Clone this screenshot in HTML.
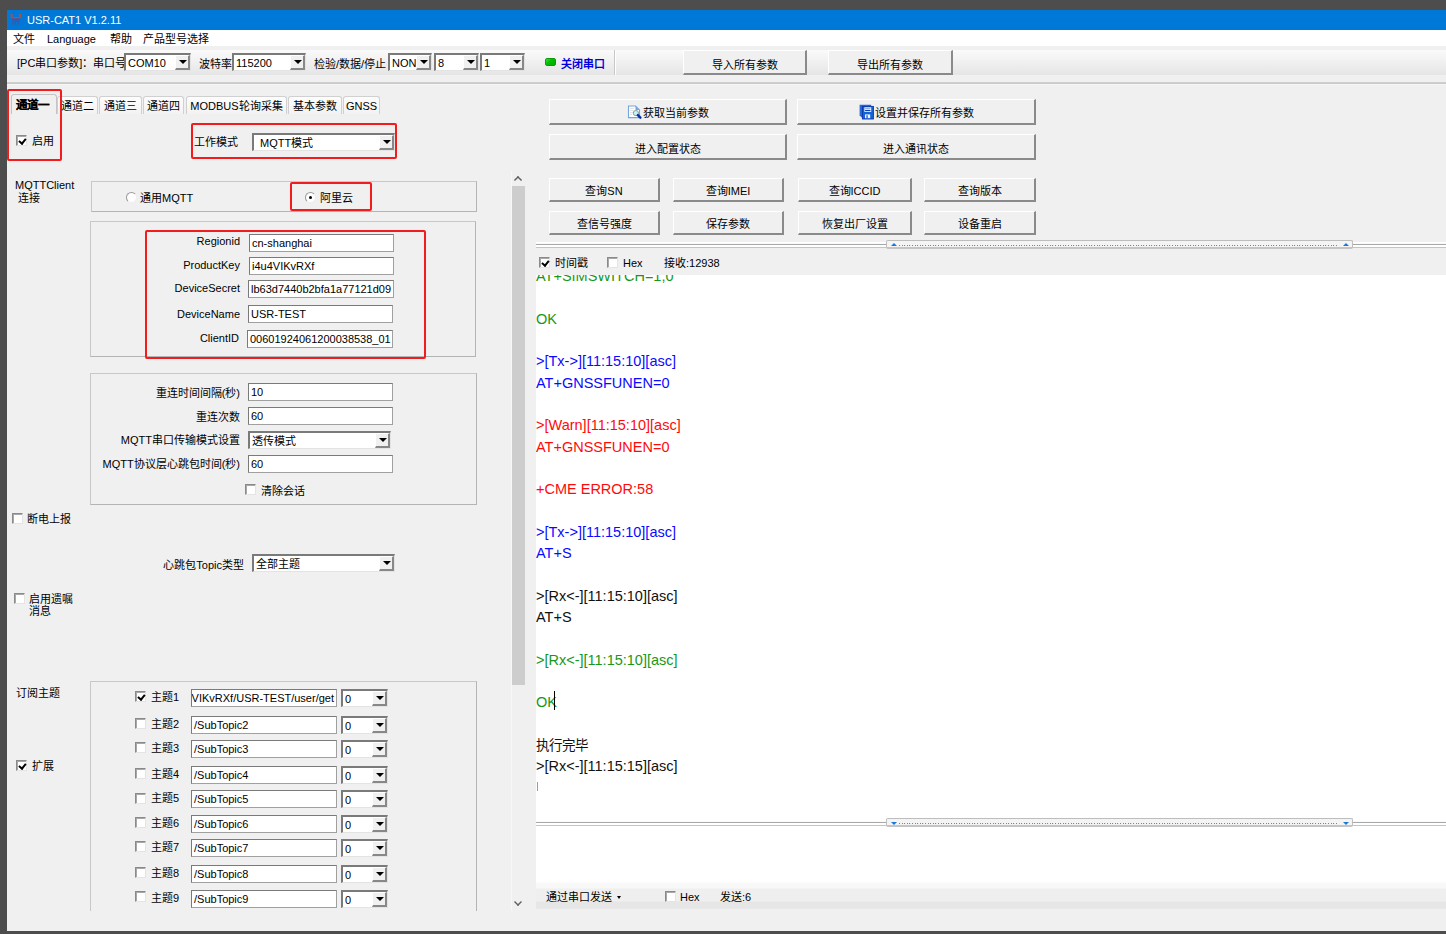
<!DOCTYPE html>
<html lang="zh-CN">
<head>
<meta charset="utf-8">
<style>
*{box-sizing:border-box;margin:0;padding:0}
html,body{width:1446px;height:934px;overflow:hidden;background:#4d4d4d}
body{position:relative;font-family:"Liberation Sans",sans-serif;font-size:11px;color:#000}
.a{position:absolute;white-space:nowrap;line-height:13px}
#win{position:absolute;left:7px;top:10px;width:1439px;height:921px;background:#f0f0f0;overflow:hidden}
#title{position:absolute;left:7px;top:10px;width:1439px;height:20px;background:#0078d7;color:#fff;font-size:12px}
#menu{position:absolute;left:7px;top:30px;width:1439px;height:16px;background:#fff}
#tool{position:absolute;left:7px;top:46px;width:1439px;height:36px;background:linear-gradient(#f0f0f0 0,#f0f0f0 4px,#fafafa 4px,#f2f2f2 14px,#e5e5e5 29px,#f0f0f0 29px)}
.hl{position:absolute;height:2px;border-top:1px solid #a0a0a0;border-bottom:1px solid #fff}
.combo{position:absolute;background:#fff;border-top:2px solid #7a7a7a;border-left:2px solid #7a7a7a;border-right:1px solid #e3e3e3;border-bottom:1px solid #e3e3e3}
.combo .t{position:absolute;left:2px;top:0;font-size:11px;white-space:nowrap;line-height:13px}
.combo .dd{position:absolute;right:0;top:0;bottom:0;width:15px;background:#f0f0f0;border-right:2px solid #888;border-bottom:2px solid #888;border-top:1px solid #fff;border-left:1px solid #fff}
.combo .dd:after{content:"";position:absolute;left:2.5px;top:50%;margin-top:-2px;border-left:4px solid transparent;border-right:4px solid transparent;border-top:4px solid #000}
.inp{position:absolute;background:#fff;border-top:1px solid #7a7a7a;border-left:1px solid #7a7a7a;border-right:1px solid #a0a0a0;border-bottom:1px solid #a0a0a0;font-size:11px;padding-left:2px;white-space:nowrap;overflow:hidden}
.btn{position:absolute;padding-top:2px;background:#f0f0f0;border-top:1px solid #fff;border-left:1px solid #fff;border-right:2px solid #8a8a8a;border-bottom:2px solid #8a8a8a;text-align:center;font-size:11px;white-space:nowrap}
.grp{position:absolute;border:1px solid #c8c8c8;border-right-color:#b4b4b4;border-bottom-color:#b4b4b4}
.red{position:absolute;border:2px solid #f31b1b;border-radius:2px}
.cb{position:absolute;width:11px;height:11px;background:#fff;border-top:1px solid #8a8a8a;border-left:1px solid #8a8a8a;border-right:1px solid #e4e4e4;border-bottom:1px solid #e4e4e4;box-shadow:inset 1px 1px 0 #a8a8a8}
.cb.on:after{content:"";position:absolute;left:2.5px;top:0.5px;width:2.5px;height:5px;border-right:2px solid #000;border-bottom:2px solid #000;transform:rotate(40deg)}
.rd{position:absolute;width:11px;height:11px;border-radius:50%;background:#fff;border:1px solid #999;border-bottom-color:#eee;border-right-color:#eee}
.rd.on:after{content:"";position:absolute;left:3px;top:3px;width:3px;height:3px;border-radius:50%;background:#000}
.tab{position:absolute;top:96px;height:18px;border:1px solid #d0d0d0;border-bottom:none;border-radius:3px 3px 0 0;background:linear-gradient(#fdfdfd,#f2f2f2);text-align:center;font-size:11px;line-height:18px;white-space:nowrap}
.tab.sel{top:94px;height:20px;background:#f0f0f0;font-weight:bold;border-color:#c4c4c4;line-height:21px;font-size:11.5px;padding-right:4px;-webkit-text-stroke:0.15px #000}
.log{position:absolute;left:0;font-size:14.5px;white-space:nowrap;line-height:normal;font-family:"Liberation Sans",sans-serif}
.g{color:#18981a}.b{color:#0a0aff}.r{color:#ff0a0a}.k{color:#111}
</style>
</head>
<body>
<div id="win"></div>
<div id="title"></div>
<div class="a" style="left:10px;top:13px;width:12px;height:13px"><svg width="12" height="13" viewBox="0 0 12 13"><path d="M1.6 1v2.6q0 1.4 1.4 1.4h5.6q1.4 0 1.4-1.4V1" fill="none" stroke="#b44c48" stroke-width="1.9"/><path d="M2 5.2h8v3.2h-0.8v3.6h-1.6v-3.6h-1.6v3.2h-1.6v-3.2h-1.2v3.6h-1.2z" fill="#2f5cb0" opacity="0.85"/></svg></div>
<div class="a" style="left:27px;top:14px;color:#fff;font-size:11px">USR-CAT1 V1.2.11</div>
<div id="menu"></div>
<div class="a" style="left:13px;top:33px">文件</div>
<div class="a" style="left:47px;top:33px">Language</div>
<div class="a" style="left:110px;top:33px">帮助</div>
<div class="a" style="left:143px;top:33px">产品型号选择</div>
<div id="tool"></div>
<div class="a" style="left:7px;top:82px;width:1439px;height:3px;background:linear-gradient(#d2d2d2 0,#c6c6c6 2px,#f6f6f6 2px)"></div>
<div class="a" style="left:17px;top:57px">[PC串口参数]：串口号</div>
<div class="combo" style="left:124px;top:53px;width:67px;height:18px"><div class="t" style="top:2px">COM10</div><div class="dd"></div></div>
<div class="a" style="left:199px;top:58px">波特率</div>
<div class="combo" style="left:232px;top:53px;width:74px;height:18px"><div class="t" style="top:2px">115200</div><div class="dd"></div></div>
<div class="a" style="left:314px;top:58px">检验/数据/停止</div>
<div class="combo" style="left:388px;top:53px;width:44px;height:18px"><div class="t" style="top:2px">NONE</div><div class="dd"></div></div>
<div class="combo" style="left:434px;top:53px;width:45px;height:18px"><div class="t" style="top:2px">8</div><div class="dd"></div></div>
<div class="combo" style="left:480px;top:53px;width:45px;height:18px"><div class="t" style="top:2px">1</div><div class="dd"></div></div>
<div class="a" style="left:545px;top:58px;width:11px;height:8px;background:linear-gradient(135deg,#40e040,#00c000 40%,#00a800);border:1px solid #0a9a0a;border-radius:2px"></div>
<div class="a" style="left:561px;top:58px;color:#0000e0;font-weight:bold">关闭串口</div>
<div class="a" style="left:614px;top:50px;width:2px;height:25px;border-left:1px solid #c8c8c8;border-right:1px solid #fff"></div>
<div class="btn" style="left:683px;top:50px;width:124px;height:25px;line-height:25px">导入所有参数</div>
<div class="btn" style="left:828px;top:50px;width:125px;height:25px;line-height:25px">导出所有参数</div>

<div class="tab" style="left:57px;width:41px">通道二</div>
<div class="tab" style="left:99px;width:43px">通道三</div>
<div class="tab" style="left:143px;width:41px">通道四</div>
<div class="tab" style="left:186px;width:101px">MODBUS轮询采集</div>
<div class="tab" style="left:288px;width:54px">基本参数</div>
<div class="tab" style="left:343px;width:37px">GNSS</div>
<div class="tab sel" style="left:11px;width:46px">通道一</div>
<div class="red" style="left:7px;top:89px;width:55px;height:72px"></div>
<div class="cb on" style="left:16px;top:135px"></div>
<div class="a" style="left:32px;top:135px">启用</div>
<div class="a" style="left:194px;top:136px">工作模式</div>
<div class="combo" style="left:252px;top:133px;width:143px;height:18px"><div class="t" style="top:2px;left:6px">MQTT模式</div><div class="dd"></div></div>
<div class="red" style="left:191px;top:123px;width:206px;height:36px"></div>
<div class="a" style="left:15px;top:179px;line-height:13px">MQTTClient<br>&nbsp;连接</div>
<div class="grp" style="left:91px;top:181px;width:386px;height:31px"></div>
<div class="rd" style="left:126px;top:192px"></div>
<div class="a" style="left:140px;top:192px">通用MQTT</div>
<div class="rd on" style="left:305px;top:192px"></div>
<div class="a" style="left:320px;top:192px">阿里云</div>
<div class="red" style="left:290px;top:182px;width:82px;height:29px"></div>
<div class="grp" style="left:90px;top:221px;width:386px;height:136px"></div>
<div class="a" style="left:140px;top:235px;width:100px;text-align:right">Regionid</div>
<div class="inp" style="left:249px;top:234px;width:145px;height:18px;line-height:16px">cn-shanghai</div>
<div class="a" style="left:140px;top:259px;width:100px;text-align:right">ProductKey</div>
<div class="inp" style="left:249px;top:257px;width:145px;height:18px;line-height:16px">i4u4VIKvRXf</div>
<div class="a" style="left:140px;top:282px;width:100px;text-align:right">DeviceSecret</div>
<div class="inp" style="left:248px;top:280px;width:146px;height:18px;line-height:16px">lb63d7440b2bfa1a77121d09</div>
<div class="a" style="left:140px;top:308px;width:100px;text-align:right">DeviceName</div>
<div class="inp" style="left:248px;top:305px;width:145px;height:18px;line-height:16px">USR-TEST</div>
<div class="a" style="left:140px;top:332px;width:99px;text-align:right">ClientID</div>
<div class="inp" style="left:247px;top:330px;width:146px;height:18px;line-height:16px">00601924061200038538_01</div>
<div class="red" style="left:145px;top:230px;width:281px;height:129px"></div>
<div class="grp" style="left:90px;top:373px;width:387px;height:132px"></div>
<div class="a" style="left:100px;top:387px;width:140px;text-align:right">重连时间间隔(秒)</div>
<div class="inp" style="left:248px;top:383px;width:145px;height:18px;line-height:16px">10</div>
<div class="a" style="left:100px;top:411px;width:140px;text-align:right">重连次数</div>
<div class="inp" style="left:248px;top:407px;width:145px;height:18px;line-height:16px">60</div>
<div class="a" style="left:100px;top:434px;width:140px;text-align:right">MQTT串口传输模式设置</div>
<div class="combo" style="left:248px;top:431px;width:143px;height:18px"><div class="t" style="top:2px">透传模式</div><div class="dd"></div></div>
<div class="a" style="left:100px;top:458px;width:140px;text-align:right">MQTT协议层心跳包时间(秒)</div>
<div class="inp" style="left:248px;top:455px;width:145px;height:18px;line-height:16px">60</div>
<div class="cb" style="left:245px;top:484px"></div>
<div class="a" style="left:261px;top:485px">清除会话</div>
<div class="cb" style="left:12px;top:513px"></div>
<div class="a" style="left:27px;top:513px">断电上报</div>
<div class="a" style="left:150px;top:559px;width:94px;text-align:right">心跳包Topic类型</div>
<div class="combo" style="left:252px;top:554px;width:143px;height:18px"><div class="t" style="top:2px">全部主题</div><div class="dd"></div></div>
<div class="cb" style="left:14px;top:593px"></div>
<div class="a" style="left:29px;top:593px;line-height:12px">启用遗嘱<br>消息</div>
<div class="a" style="left:16px;top:687px">订阅主题</div>
<div class="grp" style="left:90px;top:681px;width:387px;height:230px;border-bottom:none"></div>
<div class="cb on" style="left:16px;top:760px"></div>
<div class="a" style="left:32px;top:760px">扩展</div>
<div class="cb on" style="left:135px;top:691px"></div>
<div class="a" style="left:151px;top:691px">主题1</div>
<div class="inp" style="left:191px;top:689px;width:146px;height:18px;line-height:16px"><span style="position:absolute;right:2px">i4u4VIKvRXf/USR-TEST/user/get</span></div>
<div class="combo" style="left:341px;top:689px;width:47px;height:18px"><div class="t" style="top:2px">0</div><div class="dd"></div></div>
<div class="cb" style="left:135px;top:718px"></div>
<div class="a" style="left:151px;top:718px">主题2</div>
<div class="inp" style="left:191px;top:716px;width:146px;height:18px;line-height:16px">/SubTopic2</div>
<div class="combo" style="left:341px;top:716px;width:47px;height:18px"><div class="t" style="top:2px">0</div><div class="dd"></div></div>
<div class="cb" style="left:135px;top:742px"></div>
<div class="a" style="left:151px;top:742px">主题3</div>
<div class="inp" style="left:191px;top:740px;width:146px;height:18px;line-height:16px">/SubTopic3</div>
<div class="combo" style="left:341px;top:740px;width:47px;height:18px"><div class="t" style="top:2px">0</div><div class="dd"></div></div>
<div class="cb" style="left:135px;top:768px"></div>
<div class="a" style="left:151px;top:768px">主题4</div>
<div class="inp" style="left:191px;top:766px;width:146px;height:18px;line-height:16px">/SubTopic4</div>
<div class="combo" style="left:341px;top:766px;width:47px;height:18px"><div class="t" style="top:2px">0</div><div class="dd"></div></div>
<div class="cb" style="left:135px;top:793px"></div>
<div class="a" style="left:151px;top:792px">主题5</div>
<div class="inp" style="left:191px;top:790px;width:146px;height:18px;line-height:16px">/SubTopic5</div>
<div class="combo" style="left:341px;top:790px;width:47px;height:18px"><div class="t" style="top:2px">0</div><div class="dd"></div></div>
<div class="cb" style="left:135px;top:817px"></div>
<div class="a" style="left:151px;top:817px">主题6</div>
<div class="inp" style="left:191px;top:815px;width:146px;height:18px;line-height:16px">/SubTopic6</div>
<div class="combo" style="left:341px;top:815px;width:47px;height:18px"><div class="t" style="top:2px">0</div><div class="dd"></div></div>
<div class="cb" style="left:135px;top:841px"></div>
<div class="a" style="left:151px;top:841px">主题7</div>
<div class="inp" style="left:191px;top:839px;width:146px;height:18px;line-height:16px">/SubTopic7</div>
<div class="combo" style="left:341px;top:839px;width:47px;height:18px"><div class="t" style="top:2px">0</div><div class="dd"></div></div>
<div class="cb" style="left:135px;top:867px"></div>
<div class="a" style="left:151px;top:867px">主题8</div>
<div class="inp" style="left:191px;top:865px;width:146px;height:18px;line-height:16px">/SubTopic8</div>
<div class="combo" style="left:341px;top:865px;width:47px;height:18px"><div class="t" style="top:2px">0</div><div class="dd"></div></div>
<div class="cb" style="left:135px;top:891px"></div>
<div class="a" style="left:151px;top:892px">主题9</div>
<div class="inp" style="left:191px;top:890px;width:146px;height:18px;line-height:16px">/SubTopic9</div>
<div class="combo" style="left:341px;top:890px;width:47px;height:18px"><div class="t" style="top:2px">0</div><div class="dd"></div></div>

<div class="a" style="left:511px;top:171px;width:15px;height:740px;background:#f0f0f0;border-left:1px solid #f7f7f7"></div>
<div class="a" style="left:512px;top:186px;width:13px;height:499px;background:#cdcdcd"></div>
<div class="a" style="left:514px;top:176px;width:8px;height:8px;border-left:2px solid #606060;border-top:2px solid #606060;transform:scale(0.72,0.72) rotate(45deg)"></div>
<div class="a" style="left:514px;top:898px;width:8px;height:8px;border-right:2px solid #606060;border-bottom:2px solid #606060;transform:scale(0.7,0.7) rotate(45deg)"></div>
<div class="btn" style="left:549px;top:99px;width:238px;height:26px;line-height:22px"><span style="display:inline-block;width:14px;height:15px;vertical-align:-3px;margin-right:2px;position:relative"><svg width="14" height="15" viewBox="0 0 14 15" style="overflow:visible"><path d="M1.5 1H8.5L12.5 5V12.6H1.5Z" fill="#fff" stroke="#75a5de" stroke-width="1.1"/><path d="M8.5 1V5H12.5Z" fill="#75a5de"/><path d="M3 3.5h4M3 5.5h4M3 7.5h3M3 9.5h2" stroke="#dcdcdc" stroke-width="0.8"/><circle cx="8.9" cy="8.1" r="2.6" fill="#c4f2fa" stroke="#8f9ba3" stroke-width="1"/><path d="M10.9 10.1L13.4 12.7" stroke="#0a2fa0" stroke-width="2.4" stroke-linecap="round"/></svg></span>获取当前参数</div>
<div class="btn" style="left:797px;top:99px;width:239px;height:26px;line-height:22px"><span style="display:inline-block;width:14px;height:15px;vertical-align:-3px;margin-right:2px"><svg width="14" height="15" viewBox="0 0 14 15" style="overflow:visible"><path d="M0.6 -0.2H12.2V12.4H2.6L0.6 10.4Z" fill="#2a6ad0"/><rect x="3.4" y="1.4" width="11" height="12.6" fill="#1462d4" stroke="#0836b0" stroke-width="0.9"/><rect x="5.4" y="2.3" width="6.8" height="4.6" fill="#fff"/><rect x="6.1" y="3.2" width="5.4" height="1.1" fill="#7a9ad6"/><rect x="6.1" y="5" width="5.4" height="1.1" fill="#0a40b8"/><rect x="6" y="9.4" width="5.2" height="3.8" fill="#eef2fa"/><rect x="7.4" y="10.2" width="1.3" height="3" fill="#1462d4"/></svg></span>设置并保存所有参数</div>
<div class="btn" style="left:549px;top:134px;width:238px;height:26px;line-height:24px">进入配置状态</div>
<div class="btn" style="left:797px;top:134px;width:239px;height:26px;line-height:24px">进入通讯状态</div>
<div class="btn" style="left:549px;top:178px;width:111px;height:24px;line-height:20px">查询SN</div>
<div class="btn" style="left:673px;top:178px;width:111px;height:24px;line-height:20px">查询IMEI</div>
<div class="btn" style="left:798px;top:178px;width:114px;height:24px;line-height:20px">查询ICCID</div>
<div class="btn" style="left:924px;top:178px;width:112px;height:24px;line-height:20px">查询版本</div>
<div class="btn" style="left:549px;top:211px;width:111px;height:24px;line-height:20px">查信号强度</div>
<div class="btn" style="left:673px;top:211px;width:111px;height:24px;line-height:20px">保存参数</div>
<div class="btn" style="left:798px;top:211px;width:114px;height:24px;line-height:20px">恢复出厂设置</div>
<div class="btn" style="left:924px;top:211px;width:112px;height:24px;line-height:20px">设备重启</div>
<div class="a" style="left:536px;top:242px;width:910px;height:6px;border-top:1px solid #fff;border-bottom:1px solid #c4c4c4;background:linear-gradient(#fafafa 0,#fafafa 1px,#a8a8a8 1px,#a8a8a8 2px,#fff 2px)"></div>
<div class="a" style="left:886px;top:240px;width:467px;height:9px;background:#f4f4f4;border:1px solid #bdbdbd;border-bottom:2px solid #c4c4c4;border-radius:2px"></div>
<div class="a" style="left:891px;top:243px;width:0;height:0;border-left:3px solid transparent;border-right:3px solid transparent;border-bottom:3px solid #1a78d8"></div>
<div class="a" style="left:1343px;top:243px;width:0;height:0;border-left:3px solid transparent;border-right:3px solid transparent;border-bottom:3px solid #1a78d8"></div>
<div class="a" style="left:899px;top:245px;width:438px;height:1px;background:repeating-linear-gradient(90deg,#4a90e0 0,#4a90e0 1px,#cfe0f4 1px,transparent 1.6px,transparent 2.6px)"></div>
<div class="cb on" style="left:539px;top:257px"></div>
<div class="a" style="left:555px;top:257px">时间戳</div>
<div class="cb" style="left:607px;top:257px"></div>
<div class="a" style="left:623px;top:257px">Hex</div>
<div class="a" style="left:664px;top:257px">接收:12938</div>
<div class="a" style="left:536px;top:275px;width:910px;height:549px;background:#fff;overflow:hidden">
<div class="log g" style="top:-6.8px">AT+SIMSWITCH=1,0</div>
<div class="log g" style="top:35.8px">OK</div>
<div class="log b" style="top:78.4px">&gt;[Tx-&gt;][11:15:10][asc]</div>
<div class="log b" style="top:99.7px">AT+GNSSFUNEN=0</div>
<div class="log r" style="top:142.3px">&gt;[Warn][11:15:10][asc]</div>
<div class="log r" style="top:163.6px">AT+GNSSFUNEN=0</div>
<div class="log r" style="top:206.2px">+CME ERROR:58</div>
<div class="log b" style="top:248.8px">&gt;[Tx-&gt;][11:15:10][asc]</div>
<div class="log b" style="top:270.1px">AT+S</div>
<div class="log k" style="top:312.7px">&gt;[Rx&lt;-][11:15:10][asc]</div>
<div class="log k" style="top:334.0px">AT+S</div>
<div class="log g" style="top:376.6px">&gt;[Rx&lt;-][11:15:10][asc]</div>
<div class="log g" style="top:419.2px">OK</div>
<div class="log k" style="top:461.8px"><span style="font-size:13.5px;position:relative;top:-3px">执行完毕</span></div>
<div class="log k" style="top:483.1px">&gt;[Rx&lt;-][11:15:15][asc]</div>
<div class="a" style="left:18px;top:416px;width:1px;height:19px;background:#000"></div>
<div class="a" style="left:1px;top:507px;width:1px;height:9px;background:#d09050"></div>
</div>
<div class="a" style="left:536px;top:820px;width:910px;height:7px;background:#fff"></div>
<div class="a" style="left:536px;top:820px;width:910px;height:6px;border-top:1px solid #fff;border-bottom:1px solid #c4c4c4;background:linear-gradient(#fafafa 0,#fafafa 1px,#a8a8a8 1px,#a8a8a8 2px,#fff 2px)"></div>
<div class="a" style="left:886px;top:818px;width:467px;height:9px;background:#f4f4f4;border:1px solid #bdbdbd;border-bottom:2px solid #c4c4c4;border-radius:2px"></div>
<div class="a" style="left:891px;top:822px;width:0;height:0;border-left:3px solid transparent;border-right:3px solid transparent;border-top:3px solid #1a78d8"></div>
<div class="a" style="left:1343px;top:822px;width:0;height:0;border-left:3px solid transparent;border-right:3px solid transparent;border-top:3px solid #1a78d8"></div>
<div class="a" style="left:899px;top:823px;width:438px;height:1px;background:repeating-linear-gradient(90deg,#4a90e0 0,#4a90e0 1px,#cfe0f4 1px,transparent 1.6px,transparent 2.6px)"></div>
<div class="a" style="left:536px;top:827px;width:910px;height:56px;background:#fff"></div>
<div class="a" style="left:536px;top:882px;width:910px;height:27px;background:linear-gradient(#fcfcfc 0,#f8f8f8 2px,#f8f8f8 6px,#efefef 7px,#efefef 19px,#e6e6e6 20px,#e6e6e6 26px,#ececec 27px)"></div>
<div class="a" style="left:546px;top:891px">通过串口发送</div>
<div class="a" style="left:617px;top:896px;width:0;height:0;border-left:2.5px solid transparent;border-right:2.5px solid transparent;border-top:3px solid #000"></div>
<div class="cb" style="left:665px;top:891px"></div>
<div class="a" style="left:680px;top:891px">Hex</div>
<div class="a" style="left:720px;top:891px">发送:6</div>

</body>
</html>
